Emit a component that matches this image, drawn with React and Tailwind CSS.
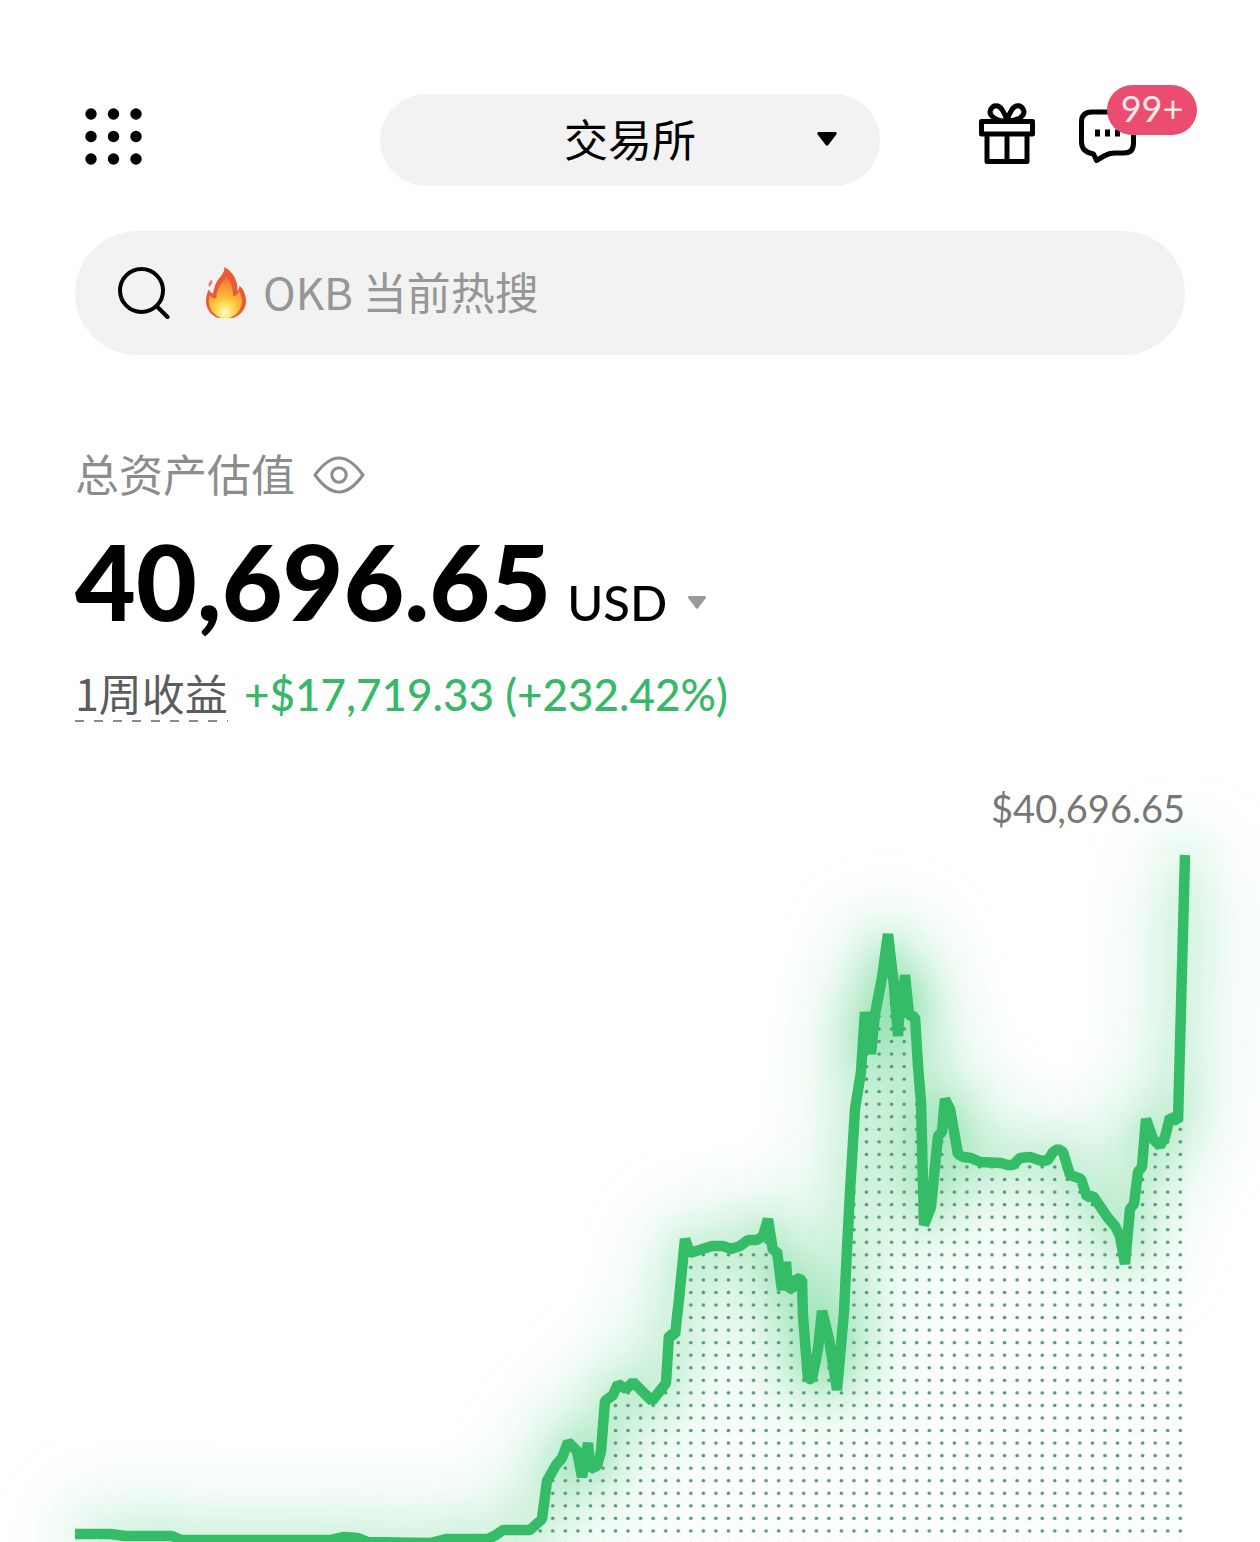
const points = [
  [75, 1535], [110, 1535], [125, 1537], [172, 1537], [181, 1541], [330, 1541], [343, 1538], [358, 1539], [368, 1543],
  [430, 1544], [446, 1540], [488, 1540], [496, 1536], [503, 1531], [530, 1531], [542, 1520], [547, 1482], [556, 1466],
  [562, 1459], [568, 1443], [577, 1452], [582, 1478], [588, 1444], [590, 1470], [597, 1467], [601, 1452], [605, 1402], [613, 1396],
  [618, 1385], [626, 1390], [633, 1383], [641, 1391], [652, 1402], [666, 1384], [669, 1336], [675, 1336], [679, 1300],
  [685, 1240], [690, 1254], [712, 1247], [723, 1247], [731, 1250], [740, 1247], [748, 1241], [757, 1241], [763, 1237],
  [768, 1220], [773, 1252], [777, 1252], [782, 1291], [786, 1263], [788, 1290], [794, 1288], [796, 1279], [802, 1281], [803, 1317],
  [808, 1380], [812, 1380], [818, 1350], [822, 1312], [829, 1340], [837, 1391], [842, 1335], [844, 1313], [847, 1250],
  [850, 1193], [855, 1110], [861, 1073], [865, 1013], [871, 1055], [875, 1015], [882, 979], [888, 935], [894, 987],
  [898, 1037], [901, 982], [903, 1012], [905, 976], [909, 1016], [915, 1018], [918, 1067], [921, 1103], [924, 1226], [931, 1208], [935, 1167],
  [938, 1137], [942, 1133], [945, 1100], [950, 1110], [958, 1155], [963, 1158], [971, 1159], [980, 1163], [1001, 1164],
  [1008, 1166], [1013, 1166], [1020, 1159], [1030, 1158], [1042, 1162], [1048, 1161], [1053, 1153], [1058, 1150],
  [1063, 1153], [1070, 1176], [1081, 1180], [1087, 1198], [1093, 1197], [1108, 1219], [1115, 1227], [1120, 1237],
  [1125, 1265], [1130, 1210], [1134, 1205], [1138, 1173], [1142, 1168], [1146, 1120], [1153, 1140], [1160, 1147],
  [1165, 1138], [1170, 1118], [1178, 1122], [1185, 856],
];

const line = points.map(p => p.join(',')).join(' ');

function GridDots() {
  return (
    <svg viewBox="0 0 58 58" className="size-[58px]" aria-hidden="true">
      {[6, 28.5, 51].map(y => [6, 28.5, 51].map(x => <circle key={`${x}-${y}`} cx={x} cy={y} r="5.7" />))}
    </svg>
  );
}

function Caret({ className }) {
  return (
    <svg viewBox="0 0 20 14" className={className} fill="currentColor" aria-hidden="true">
      <path d="M1.5 0h17q2 .6.8 2.4l-8 10.6q-1.3 1.4-2.6 0l-8-10.6Q-.5.6 1.5 0Z" />
    </svg>
  );
}

function GiftIcon() {
  return (
    <svg viewBox="0 0 58 62" className="h-[62px] w-[58px]" fill="none" stroke="currentColor" strokeWidth="5" strokeLinejoin="round" aria-hidden="true">
      <rect x="3.5" y="18.5" width="51" height="12.5" />
      <path d="M9 31V58.5H49V31M29 31V58" />
      <path d="M28 18C19 18 10 13 12.5 7C15 1 21 2 24 6.5C26.5 10 28 14 29 18C30 14 31.5 10 34 6.5C37 2 43 1 45.5 7C48 13 39 18 30 18Z" />
    </svg>
  );
}

function ChatIcon() {
  return (
    <svg viewBox="0 0 58 54" className="h-[54px] w-[58px]" fill="none" stroke="currentColor" strokeWidth="5" strokeLinejoin="round" aria-hidden="true">
      <path d="M13 3H45Q54.5 3 54.5 12V34Q54.5 44 45 44H36Q30 44 25 47L17.5 51.5L14.5 45Q2.5 43 2.5 33V13Q2.5 3 13 3Z" />
      <path d="M18.5 20.5v7M28.5 20.5v7M38.5 20.5v7" />
    </svg>
  );
}

function SearchIcon() {
  return (
    <svg viewBox="0 0 52 52" className="size-[52px] shrink-0" fill="none" stroke="currentColor" strokeWidth="4" strokeLinecap="round" aria-hidden="true">
      <circle cx="23.5" cy="23.5" r="21.5" />
      <path d="M38.5 39 49.5 50" />
    </svg>
  );
}

function FireIcon() {
  return (
    <svg viewBox="0 0 42 52" className="h-[52px] w-[42px] shrink-0" aria-hidden="true">
      <defs>
        <radialGradient id="flame" cx="20" cy="43" r="38" gradientUnits="userSpaceOnUse">
          <stop offset="0" stopColor="#ffed55" />
          <stop offset=".3" stopColor="#fdc53a" />
          <stop offset=".62" stopColor="#f5933a" />
          <stop offset="1" stopColor="#e75532" />
        </radialGradient>
        <radialGradient id="core" cx="20" cy="46" r="15" gradientUnits="userSpaceOnUse">
          <stop offset="0" stopColor="#fffbd2" />
          <stop offset="1" stopColor="#ffe14a" stopOpacity="0" />
        </radialGradient>
      </defs>
      <path fill="#e95a35" d="M19.5 0C28 5 33 13 32.5 24C34 22.5 34.5 20.5 34.5 18.5C39 23 41 28 41 34C41 42 36 48 28 51H13C5 48 1 41 1 34C1 29 2.5 25.5 3.5 22.5C5 25 6 26 8 26.5C9.5 21 10 16 14 11.5C18 7 19.5 4 19.5 0Z" />
      <path fill="#ed7a6c" d="M7 12.5Q8.5 16.5 4 20Q2 16 7 12.5Z" />
      <path fill="url(#flame)" d="M20.5 8C25 14 28 19 28 29C31 29 33 27 34 24C38 31 38 37 35 42C32 48 27 51 21 51C11 51 5 44 4 37C3.5 33 4 30 5 28C7 31 9 32 11.5 31C11.5 22 15 18 18 14C19.5 12 20.5 10 20.5 8Z" />
      <ellipse fill="url(#core)" cx="20" cy="40" rx="12" ry="12" />
    </svg>
  );
}

function EyeIcon() {
  return (
    <svg viewBox="0 0 52 38" className="h-[38px] w-[52px]" fill="none" stroke="currentColor" strokeWidth="3" strokeLinejoin="round" aria-hidden="true">
      <path d="M2 19C10 8 17.5 2 26 2S42 8 50 19C42 30 34.5 36 26 36S10 30 2 19Z" />
      <circle cx="26" cy="19" r="7.2" />
    </svg>
  );
}

function Chart() {
  return (
    <svg viewBox="0 842 1260 700" className="block w-full overflow-visible" role="img" aria-label="总资产估值">
      <defs>
        <pattern id="dots" x="1174" y="1124" width="12.55" height="12.55" patternUnits="userSpaceOnUse">
          <circle cx="6.27" cy="6.27" r="1.8" fill="#56967a" />
        </pattern>
        <filter id="glow" x="-150" y="650" width="1600" height="1100" filterUnits="userSpaceOnUse">
          <feGaussianBlur stdDeviation="20" />
        </filter>
        <filter id="halo" x="-150" y="650" width="1600" height="1100" filterUnits="userSpaceOnUse">
          <feGaussianBlur stdDeviation="42" />
        </filter>
      </defs>
      <polyline points={line} fill="none" stroke="#3fcb74" strokeWidth="12" filter="url(#halo)" />
      <polyline points={line} fill="none" stroke="#3fcb74" strokeWidth="5" filter="url(#glow)" />
      <polygon points={`${line} 1185,1560 75,1560`} fill="#34bd66" fillOpacity=".02" />
      <polygon points={`${line} 1185,1560 75,1560`} fill="url(#dots)" />
      <polyline points={line} fill="none" stroke="#34bd66" strokeWidth="10.5" strokeLinejoin="bevel" />
    </svg>
  );
}

export default function App() {
  return (
    <main className="min-h-screen overflow-hidden bg-white font-['Noto_Sans_CJK_SC',sans-serif] text-black">
      <div className="px-[75px] pt-[94px]">
        <header className="grid grid-cols-[1fr_45%_1fr] items-center">
          <button type="button" aria-label="菜单" className="mb-[6px] w-fit pl-[10px]">
            <GridDots />
          </button>
          <button type="button" className="relative flex h-[92px] items-center justify-center rounded-full bg-[#f2f2f2] pb-1 text-[44px] leading-[60px]">
            交易所
            <Caret className="absolute top-[38px] right-[43px] h-[14px] w-5" />
          </button>
          <div className="mr-12 flex items-center justify-end gap-[43px]">
            <button type="button" aria-label="礼物" className="mb-3">
              <GiftIcon />
            </button>
            <button type="button" aria-label="消息" className="relative mb-2">
              <ChatIcon />
              <span className="absolute -top-6 left-7 flex h-[50px] w-[90px] items-center justify-center rounded-full bg-[#ea4d70] pb-1 font-['Lato',sans-serif] text-[36px] leading-[46px] text-[#ffe9e4]">
                99+
              </span>
            </button>
          </div>
        </header>

        <label className="mt-[45px] flex h-[124px] items-center rounded-full bg-[#f2f2f2] px-[43px]">
          <SearchIcon />
          <span className="ml-[35px]">
            <FireIcon />
          </span>
          <input
            type="search"
            aria-label="搜索"
            placeholder="OKB 当前热搜"
            className="ml-4 min-w-0 flex-1 bg-transparent pb-1 text-[44px] leading-[60px] outline-none placeholder:text-[#969696]"
          />
        </label>

        <section>
          <div className="mt-[88px] flex items-center gap-[18px] text-[#8c8c8c]">
            <h1 className="pb-1 text-[44px] leading-[60px]">总资产估值</h1>
            <button type="button" aria-label="隐藏资产">
              <EyeIcon />
            </button>
          </div>
          <div className="mt-[14px] flex items-baseline gap-4 font-['Lato',sans-serif]">
            <p className="text-[105px] leading-[118px] font-black">40,696.65</p>
            <button type="button" className="flex items-center gap-5 text-[49px] leading-[60px] font-medium">
              USD
              <Caret className="h-[13px] w-5 text-[#999]" />
            </button>
          </div>
          <div className="mt-[26px] flex items-center gap-4">
            <button
              type="button"
              className="bg-[repeating-linear-gradient(90deg,#8a8a8a_0_9px,transparent_9px_19px)] bg-[length:100%_2px] bg-bottom bg-no-repeat pb-[3px] text-[43px] leading-[54px] text-[#5c5c5c]"
            >
              1周收益
            </button>
            <p className="font-['Lato',sans-serif] text-[44px] leading-[54px] font-medium text-[#36b868]">+$17,719.33 (+232.42%)</p>
          </div>
        </section>
        <p className="mt-[62px] text-right font-['Lato',sans-serif] text-[38px] leading-[48px] text-[#777]">$40,696.65</p>
      </div>
      <div className="pt-[9px]">
        <Chart />
      </div>
    </main>
  );
}
